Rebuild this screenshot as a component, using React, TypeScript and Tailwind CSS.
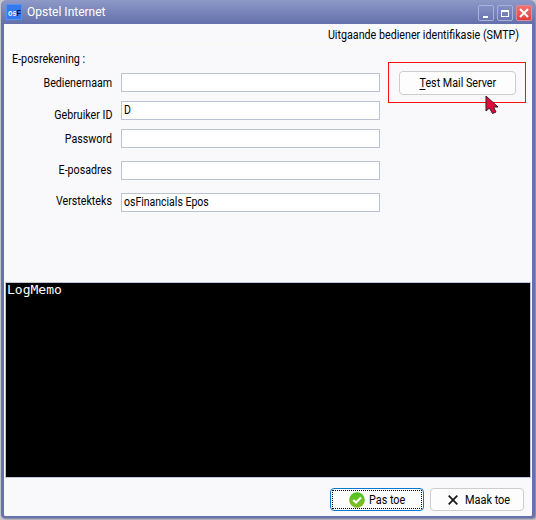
import type { ReactNode } from "react";

type FieldProps = { label: string; value?: string; row: string; labelClass: string };

function Field({ label, value = "", row, labelClass }: FieldProps) {
  return (
    <div className={`flex items-start ${row}`}>
      <div className="flex w-[108px] shrink-0 justify-end">
        <span className={`origin-right scale-x-[0.89] whitespace-nowrap leading-[19px] ${labelClass}`}>{label}</span>
      </div>
      <div className="ml-[9px] h-[19px] w-[259px] whitespace-nowrap border border-[#bcc3d5] bg-white pl-[2px] leading-[16px]">
        <span className="inline-block origin-left scale-x-[0.875]">{value}</span>
      </div>
    </div>
  );
}

function Caption({ children, close }: { children: ReactNode; close?: boolean }) {
  return (
    <div
      className={`flex h-[16px] w-[16px] items-center justify-center rounded-[2px] border ${
        close ? "border-[#e08a94] bg-linear-to-b from-[#f0716f] to-[#e03c3c]" : "border-[#a9b2da] bg-linear-to-b from-[#8490c4] to-[#6a76b2]"
      }`}
    >
      {children}
    </div>
  );
}

export default function App() {
  return (
    <div className="relative h-[520px] w-[536px] overflow-hidden bg-[#c9c9cc] pl-px font-['Roboto','Liberation_Sans',sans-serif] text-[12px] text-black">
      <div className="flex h-[518px] w-[534px] flex-col rounded-t-[6px] rounded-b-[4px] border-x-[3px] border-b-2 border-[#6672ae] bg-[#f9f9fc] shadow-[1px_1px_2px_#77779a]">
        <div className="-mx-[3px] flex h-[24px] shrink-0 items-center rounded-t-[6px] bg-linear-to-b from-[#8e99c8] to-[#6470ab] pl-[5px] pr-[3px]">
          <div className="flex h-[16px] w-[16px] items-center justify-center overflow-hidden border border-[#5690f2] bg-[#3378ed]">
            <svg width="13" height="14" viewBox="0 0 13 14" fontFamily="Liberation Sans, sans-serif" fontWeight="bold">
              <text x="0" y="10.5" fontSize="9" fill="#e7f2ff" textLength="13" lengthAdjust="spacingAndGlyphs">
                os<tspan fill="#080d50">F</tspan>
              </text>
            </svg>
          </div>
          <span className="ml-[5px] whitespace-nowrap text-[12px] leading-[16px] text-white">Opstel Internet</span>
          <div className="ml-auto flex items-center gap-[3px] pt-[2px]">
            <Caption><span className="mt-[7px] mr-[2px] h-[2px] w-[5px] bg-white" /></Caption>
            <Caption><span className="h-[7px] w-[8px] border border-t-2 border-white" /></Caption>
            <Caption close>
              <svg width="10" height="10" viewBox="0 0 10 10" stroke="white" strokeWidth="2"><path d="M1 1L9 9M9 1L1 9" /></svg>
            </Caption>
          </div>
        </div>

        <div className="flex h-[20px] shrink-0 items-center justify-end pr-[13px] pt-[2px]">
          <span className="origin-right scale-x-[0.893] whitespace-nowrap">Uitgaande bediener identifikasie (SMTP)</span>
        </div>
        <div className="flex h-[238px] shrink-0 flex-col">
          <div className="ml-[8px] h-[2px] shrink-0 bg-[#fbf9f5]" />
          <div className="flex h-[27px] shrink-0 items-center pb-[2px] pl-[8px]">
            <span className="origin-left scale-x-90 whitespace-nowrap">E-posrekening :</span>
          </div>
          <div className="flex">
            <div className="w-[376px] shrink-0">
              <Field label="Bedienernaam" row="h-[28px]" labelClass="mt-px" />
              <Field label="Gebruiker ID" value="D" row="h-[28px]" labelClass="mt-[5px]" />
              <Field label="Password" row="h-[32px]" labelClass="mt-px" />
              <Field label="E-posadres" row="h-[32px]" labelClass="" />
              <Field label="Verstekteks" value="osFinancials Epos" row="h-[20px]" labelClass="-mt-px" />
            </div>
            <div className="relative -mt-[11px] ml-[8px] flex h-[41px] w-[138px] border border-[#fa1010] pt-[8px] pl-[10px]">
              <button className="flex h-[24px] w-[117px] justify-center whitespace-nowrap rounded-[4px] border border-[#cdcdcd] bg-[#fdfdfd] leading-[22px]">
                <span className="scale-x-[0.895]"><u className="underline-offset-2">T</u>est Mail Server</span>
              </button>
              <svg className="absolute left-[95px] top-[32px]" width="18" height="20" viewBox="0 0 18 20">
                <path d="M2 1V16L5.5 13L8.5 18.5L12 17L9.5 12H14Z" fill="#e60a3c" stroke="#321a25" strokeWidth="1" />
              </svg>
            </div>
          </div>
        </div>

        <div className="ml-px h-[196px] w-[526px] shrink-0 border border-[#bcc3da] bg-black pl-px">
          <span className="block font-['DejaVu_Sans_Mono',monospace] text-[13px] leading-[14px] text-white">LogMemo</span>
        </div>
        <div className="flex items-start justify-end gap-[6px] pr-[8px] pt-[10px]">
          <button className="flex h-[23px] w-[94px] items-center rounded-[4px] border border-[#0878cf] bg-[#fdfdfd] p-px">
            <span className="flex h-[19px] w-full items-center border border-dotted border-black pl-[16px]">
              <svg width="16" height="16" viewBox="0 0 16 16"><defs><linearGradient id="ok" x2="0" y2="1"><stop stopColor="#49c51f" /><stop offset="1" stopColor="#8aba26" /></linearGradient></defs><circle cx="8" cy="8" r="7.8" fill="url(#ok)" /><path d="M4.2 8L7 10.5L12 5.5" fill="none" stroke="white" strokeWidth="2.2" /></svg>
              <span className="ml-[4px] origin-left scale-x-90 whitespace-nowrap">Pas toe</span>
            </span>
          </button>
          <button className="flex h-[23px] w-[94px] items-center rounded-[4px] border border-[#cdcdcd] bg-[#fdfdfd] pl-[17px]">
            <svg className="shrink-0" width="10" height="10" viewBox="0 0 10 10" stroke="#151515" strokeWidth="1.7"><path d="M.7 .7L9.3 9.3M9.3 .7L.7 9.3" /></svg>
            <span className="ml-[7px] origin-left scale-x-[0.91] whitespace-nowrap">Maak toe</span>
          </button>
        </div>
      </div>
    </div>
  );
}
